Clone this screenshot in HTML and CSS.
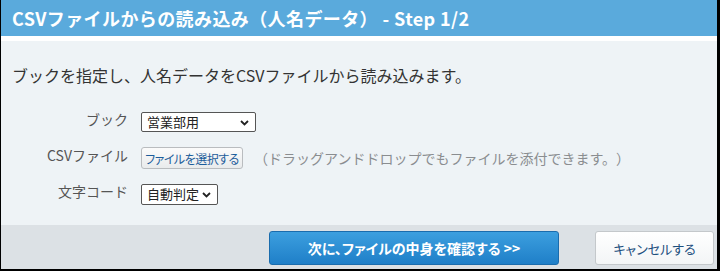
FILE: index.html
```html
<!DOCTYPE html>
<html lang="ja">
<head>
<meta charset="utf-8">
<link rel="stylesheet" href="styles.css">
</head>
<body>
<div class="frame">
  <div class="header"><h1 class="title">CSVファイルからの読み込み（人名データ） - Step 1/2</h1></div>
  <div class="content">
    <p class="desc">ブックを指定し、人名データをCSVファイルから読み込みます。</p>
    <div class="form">
      <div class="label">ブック</div>
      <div class="field">
        <span class="select select-book"><span class="select-text">営業部用</span>
          <svg class="chev" width="9" height="6" viewBox="0 0 9 6"><path d="M1 1 L4.5 4.5 L8 1" fill="none" stroke="#222" stroke-width="1.8"/></svg>
        </span>
      </div>
      <div class="label">CSVファイル</div>
      <div class="field">
        <span class="filebtn">ファイルを選択する</span>
        <span class="hint">（ドラッグアンドドロップでもファイルを添付できます。）</span>
      </div>
      <div class="label">文字コード</div>
      <div class="field">
        <span class="select select-code"><span class="select-text">自動判定</span>
          <svg class="chev" width="9" height="6" viewBox="0 0 9 6"><path d="M1 1 L4.5 4.5 L8 1" fill="none" stroke="#222" stroke-width="1.8"/></svg>
        </span>
      </div>
    </div>
  </div>
  <div class="footer">
    <span class="btn btn-primary">次に、ファイルの中身を確認する &gt;&gt;</span>
    <span class="btn btn-cancel">キャンセルする</span>
  </div>
</div>
</body>
</html>
```
FILE: styles.css
```css
html, body { margin: 0; padding: 0; }
body { font-family: "Noto Sans CJK JP", "Noto Sans", sans-serif; text-spacing-trim: space-all; }
.frame {
  width: 720px; height: 271px; box-sizing: border-box;
  border-left: 1px solid #000; border-right: 3px solid #000; border-bottom: 2px solid #000;
  background: #eef3f6;
  display: flex; flex-direction: column;
}
.header {
  height: 36px; background: #5aaadc; border-bottom: 5px solid #fff;
  padding-left: 11px; display: flex; align-items: center;
}
.title {
  margin: 0; color: #fff; font-size: 18px; font-weight: bold; line-height: 22px;
  font-family: "Noto Sans CJK JP", sans-serif; white-space: pre; letter-spacing: 0.4px;
}
.content { flex: 1; padding: 24px 0 0 11px; }
.desc { margin: 0; font-size: 16px; line-height: 20px; color: #333; height: 20px; }
.form {
  margin-top: 19px;
  display: grid; grid-template-columns: 116px 1fr; column-gap: 13px;
  grid-auto-rows: 36px; align-items: center;
}
.label { text-align: right; font-size: 14px; color: #555; padding-bottom: 7px; line-height: 18px; }
.field { display: flex; align-items: center; }
.select {
  position: relative; display: inline-flex; align-items: center; box-sizing: border-box;
  border: 1px solid #555; border-radius: 2px; background: #fff;
  font-size: 13px; color: #222; padding-left: 5px;
}
.select-book { width: 115px; height: 20px; }
.select-code { width: 77px; height: 21px; }
.select-text { line-height: 18px; }
.chev { position: absolute; right: 6px; top: 7px; }
.filebtn {
  box-sizing: border-box; width: 102px; height: 22px;
  border: 1px solid #b9bcbf; border-radius: 3px;
  background: linear-gradient(#fbfbfb, #e9ebec);
  color: #1d5d9b; font-size: 12px; display: inline-flex; align-items: center; justify-content: center;
  font-feature-settings: "palt"; letter-spacing: -0.5px;
}
.hint { margin-left: 11px; font-size: 14px; color: #8a8d90; }
.footer {
  height: 44px; box-sizing: border-box; background: #dce1e5;
  display: flex; justify-content: flex-end; align-items: flex-start;
  padding: 6px 3px 0 0; gap: 36px;
}
.btn {
  box-sizing: border-box; height: 34px; border-radius: 3px;
  display: inline-flex; align-items: center; justify-content: center;
  font-size: 14px; font-weight: bold; font-feature-settings: "palt";
}
.btn-primary {
  width: 290px; color: #fff;
  background: linear-gradient(#3c9fdf, #1f7fc8);
  border: 1px solid #1a6cad;
}
.btn-cancel {
  width: 119px; color: #1d4f7e; font-weight: normal; font-size: 13px;
  background: linear-gradient(#ffffff, #f3f5f6);
  border: 1px solid #c4c8cb;
}
```
